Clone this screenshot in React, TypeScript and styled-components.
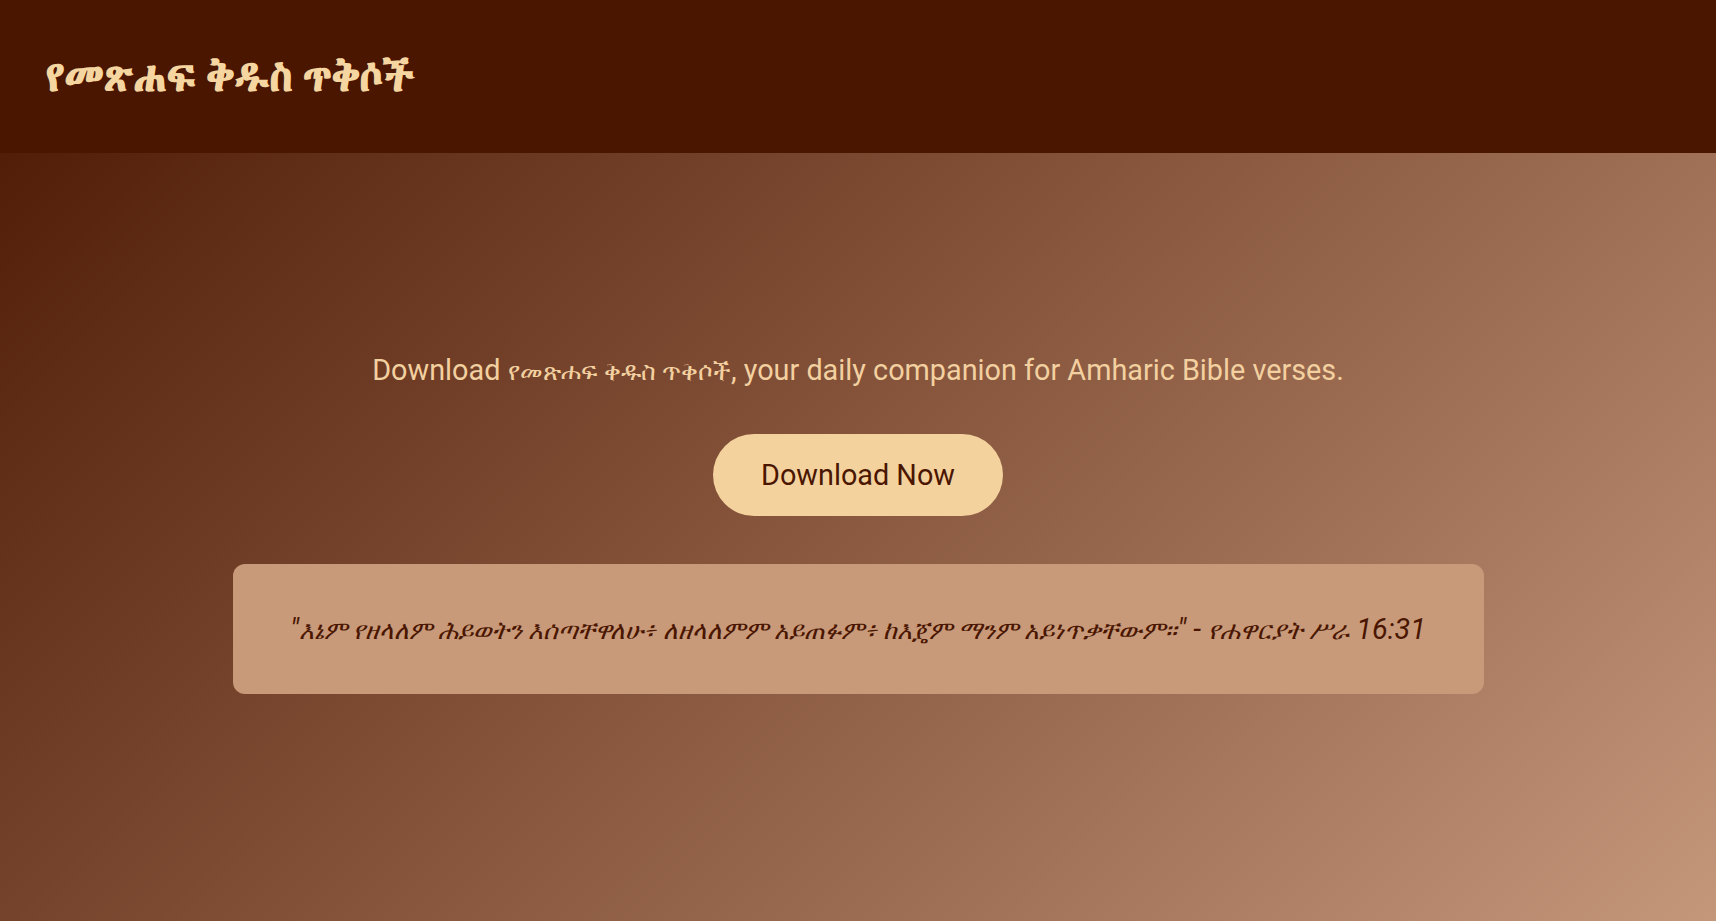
import React from "react";
import styled, { createGlobalStyle } from "styled-components";

const GlobalStyle = createGlobalStyle`
  html, body { margin: 0; padding: 0; }
  body { font-family: Roboto, sans-serif; }
  * { box-sizing: border-box; }
`;

const Page = styled.div`
  min-height: 100vh;
  display: flex;
  flex-direction: column;
  background: linear-gradient(135deg, #4a1600 0%, #c4967a 100%);
`;

const Header = styled.header`
  height: 153px;
  background: #4a1600;
  display: flex;
  align-items: center;
  padding: 0 46px;
`;

const Title = styled.h1`
  margin: 0;
  font-size: 42px;
  font-weight: 700;
  color: #f5d5a0;
  font-family: Roboto, "Abyssinica SIL", sans-serif;
`;

const Main = styled.main`
  flex: 1;
  display: flex;
  flex-direction: column;
  align-items: center;
  padding-top: 197px;
`;

const Lead = styled.p`
  margin: 0;
  font-size: 28.8px;
  line-height: 40px;
  color: #f3d0a0;
  text-align: center;
`;

const Ethiopic = styled.span`
  font-size: 0.87em;
  line-height: 1;
`;

const DownloadButton = styled.button`
  margin-top: 44px;
  height: 82px;
  padding: 0 48px;
  border: none;
  border-radius: 41px;
  background: #f3d29e;
  color: #4a1600;
  font-family: Roboto, sans-serif;
  font-size: 28.8px;
  cursor: pointer;
`;

const QuoteCard = styled.div`
  margin-top: 48px;
  width: 1251px;
  height: 130px;
  border-radius: 12px;
  background: #c89a7a;
  display: flex;
  align-items: center;
  justify-content: center;
  padding: 0 40px;
`;

const Quote = styled.p`
  margin: 0;
  font-style: italic;
  font-size: 28.8px;
  line-height: 40px;
  color: #4a1600;
  text-align: center;
  white-space: nowrap;
`;

export default function App() {
  return (
    <>
      <GlobalStyle />
      <Page>
        <Header>
          <Title>የመጽሐፍ ቅዱስ ጥቅሶች</Title>
        </Header>
        <Main>
          <Lead>
            Download <Ethiopic>የመጽሐፍ ቅዱስ ጥቅሶች</Ethiopic>, your daily companion for Amharic Bible verses.
          </Lead>
          <DownloadButton>Download Now</DownloadButton>
          <QuoteCard>
            <Quote>
              "<Ethiopic>እኔም የዘላለም ሕይወትን እሰጣቸዋለሁ፥ ለዘላለምም አይጠፉም፥ ከእጄም ማንም አይነጥቃቸውም።</Ethiopic>" - <Ethiopic>የሐዋርያት ሥራ</Ethiopic> 16:31
            </Quote>
          </QuoteCard>
        </Main>
      </Page>
    </>
  );
}
